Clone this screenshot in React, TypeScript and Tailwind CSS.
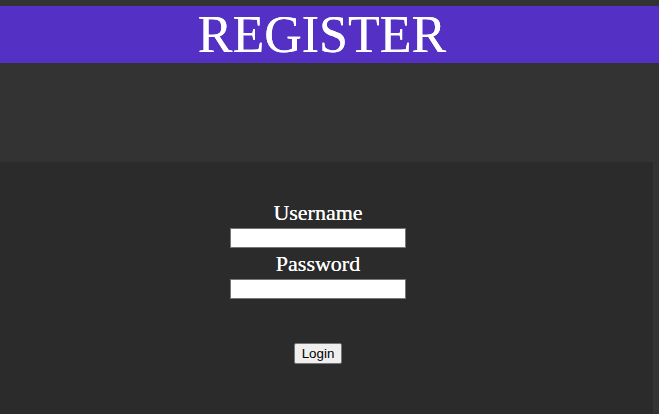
export default function App() {
  return (
    <div className="min-h-[414px] bg-[#333333] pt-[6px]" style={{ fontFamily: '"Liberation Serif", serif' }}>
      <header className="h-[57px] bg-[#5530c4]">
        <h1 className="w-[644px] text-center text-[52px] leading-[57px] text-white [text-shadow:0_0_0.5px_#fff]">REGISTER</h1>
      </header>
      <div className="h-[99px]" />
      <main className="mr-[6px] h-[252px] bg-[#2b2b2b]">
        <form className="flex w-[636px] flex-col items-center pt-[38px]">
          <label className="text-[22px] leading-[26px] text-white [text-shadow:0_0_0.4px_#fff]">Username</label>
          <input type="text" className="mt-[2px] h-[20px] w-[176px] border border-[#767676] bg-white" />
          <label className="mt-[3px] text-[22px] leading-[26px] text-white [text-shadow:0_0_0.4px_#fff]">Password</label>
          <input type="password" className="mt-[2px] h-[20px] w-[176px] border border-[#767676] bg-white" />
          <button
            type="button"
            className="mt-[44px] h-[21px] rounded-[2px] border border-[#767676] bg-[#efefef] px-[7px] text-[13.33px] leading-[19px] text-black"
            style={{ fontFamily: '"Liberation Sans", sans-serif' }}
          >
            Login
          </button>
        </form>
      </main>
    </div>
  );
}
